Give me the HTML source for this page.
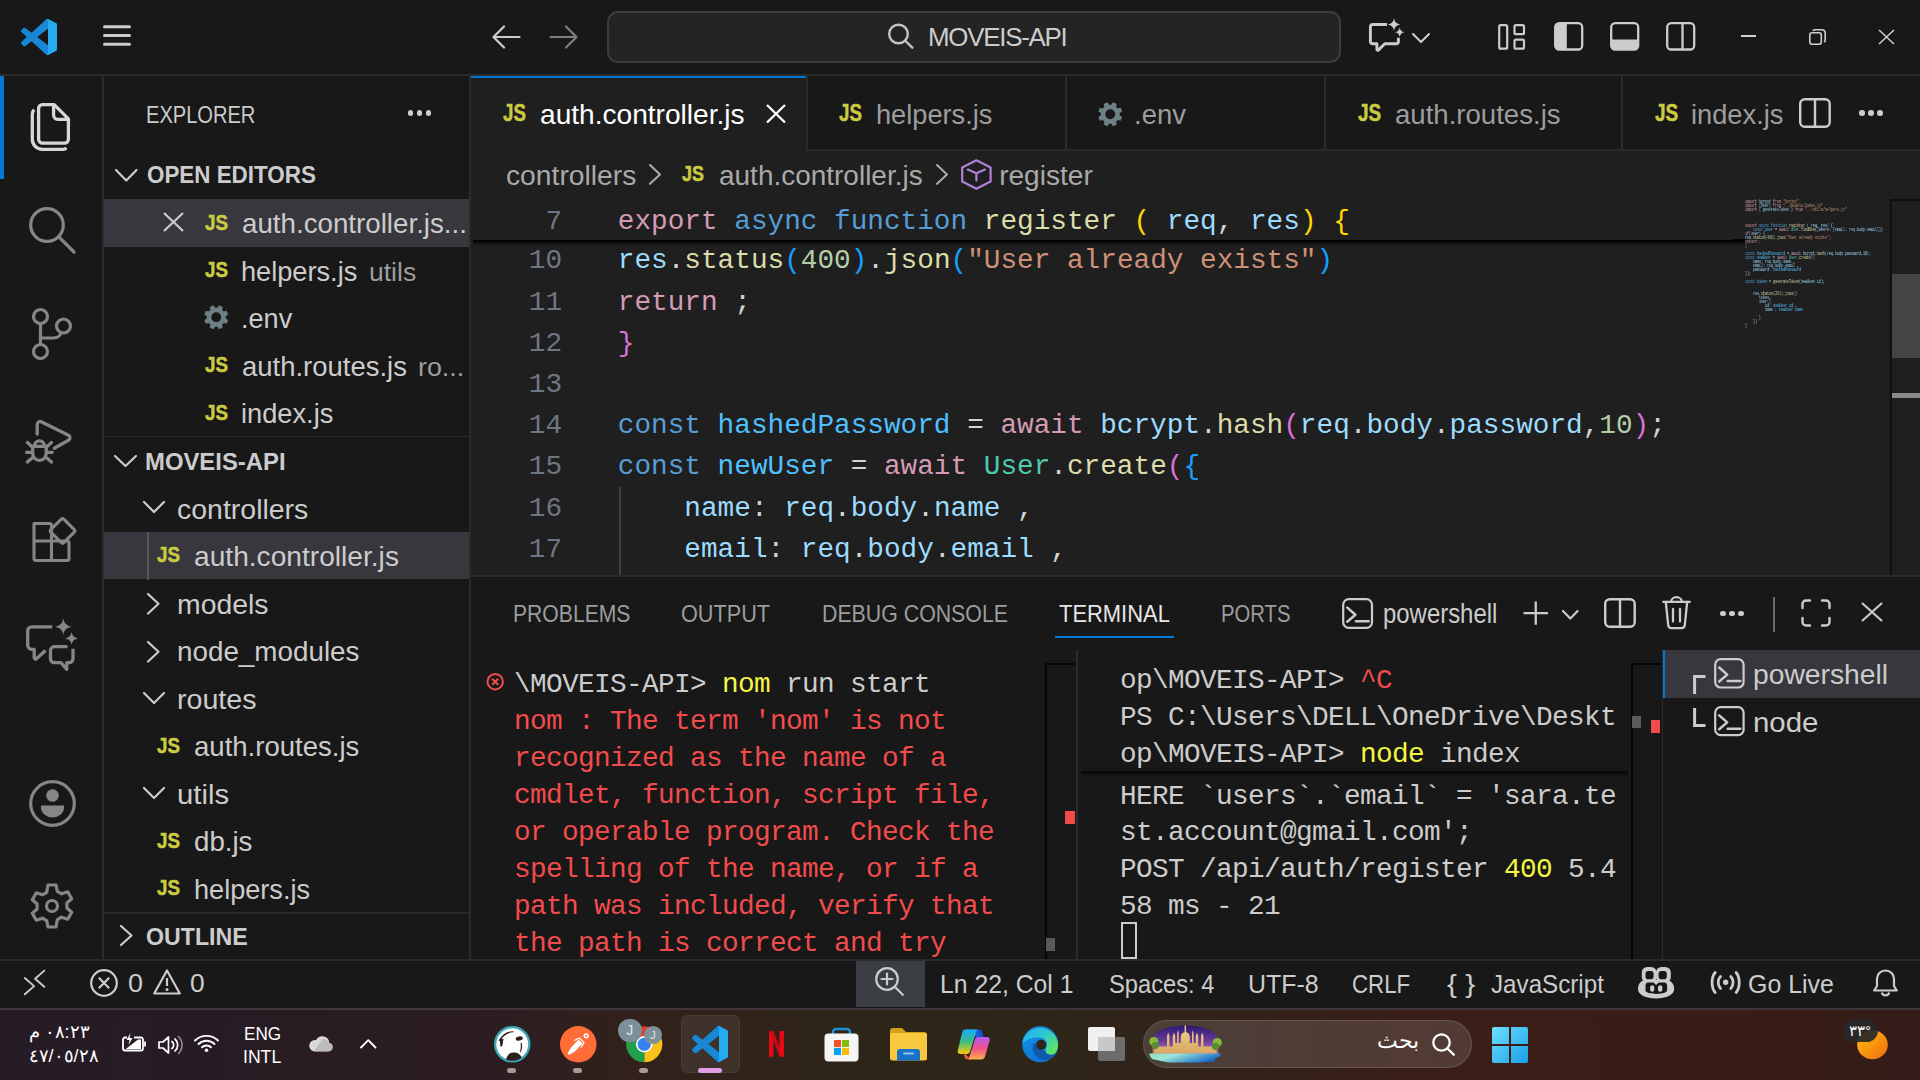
<!DOCTYPE html>
<html><head><meta charset="utf-8">
<style>
*{box-sizing:border-box;margin:0;padding:0}
html,body{width:1920px;height:1080px;overflow:hidden;background:#181818;font-family:"Liberation Sans",sans-serif;color:#cccccc}
.a{position:absolute;white-space:pre}
svg{position:absolute;overflow:visible}
</style></head><body>
<div class="a" style="left:0px;top:0px;width:1920px;height:74px;background:#181818;"></div>
<div class="a" style="left:0px;top:74px;width:1920px;height:2px;background:#2b2b2b;"></div>
<!-- logo -->
<svg style="left:21px;top:19px" width="36" height="36" viewBox="0 0 100 100"><path fill-rule="evenodd" d="M96.5 10.8 75.9 0.9c-2.4-1.2-5.2-.7-7.1 1.2L29.4 38 12.2 25c-1.6-1.2-3.8-1.1-5.3.2L1.4 30.3c-1.8 1.7-1.8 4.5 0 6.2L16.3 50 1.4 63.5c-1.8 1.7-1.8 4.5 0 6.2l5.5 5c1.5 1.4 3.7 1.5 5.3.2L29.4 62l39.4 35.9c1.9 1.9 4.7 2.4 7.1 1.2l20.6-9.9c2.2-1 3.5-3.2 3.5-5.6V16.4c0-2.4-1.4-4.6-3.5-5.6zM75 72.7 45.1 50 75 27.3z" fill="#1787d6"/><path d="M75.9 99.1 96.5 89.2c2.2-1 3.5-3.2 3.5-5.6V16.4c0-2.4-1.4-4.6-3.5-5.6L75.9.9C74.2 0 72.4-.1 70.8.5 72.5 1 75 2.5 75 5.5V94.5c0 3-2.5 4.5-4.2 5 1.6.5 3.5.4 5.1-.4z" fill="#27abf0"/></svg>
<!-- hamburger -->
<svg style="left:103px;top:25px" width="28" height="22" viewBox="0 0 28 22"><g stroke="#cccccc" stroke-width="3" stroke-linecap="round"><path d="M1.5 1.7h25M1.5 10.5h25M1.5 19.2h25"/></g></svg>
<!-- back / fwd -->
<svg style="left:492px;top:25px" width="29" height="24" viewBox="0 0 29 24"><g fill="none" stroke="#cccccc" stroke-width="2.2" stroke-linecap="round" stroke-linejoin="round"><path d="M12 1.5 1.5 12 12 22.5M1.5 12h26"/></g></svg>
<svg style="left:549px;top:25px" width="29" height="24" viewBox="0 0 29 24"><g fill="none" stroke="#7f7f7f" stroke-width="2.2" stroke-linecap="round" stroke-linejoin="round"><path d="M17 1.5 27.5 12 17 22.5M1.5 12h26"/></g></svg>
<!-- command center -->
<div class="a" style="left:607px;top:11px;width:734px;height:52px;background:#242424;border:2px solid #3c3c3c;border-radius:11px"></div>
<svg style="left:887px;top:23px" width="27" height="26" viewBox="0 0 27 26"><g fill="none" stroke="#c4c4c4" stroke-width="2.4" stroke-linecap="round"><circle cx="11.5" cy="11" r="9.3"/><path d="M18.5 18 25.3 24.7"/></g></svg>
<div class="a" style="left:928px;top:22px;font-size:25.9px;line-height:30px;color:#cccccc;letter-spacing:-1.25px">MOVEIS-API</div>
<!-- copilot -->
<svg style="left:1366px;top:18px" width="39" height="36" viewBox="0 0 39 36"><path d="M21 6.5H6.6a2.2 2.2 0 0 0-2.2 2.2V23.6a2.2 2.2 0 0 0 2.2 2.2H10.9V31.2a1 1 0 0 0 1.7.7L18.8 25.8H30.2a2.2 2.2 0 0 0 2.2-2.2V19.8" fill="none" stroke="#cccccc" stroke-width="2.9" stroke-linejoin="round"/><path d="M28 0.2Q28.8 5.6 34.2 6.4 28.8 7.2 28 12.6 27.2 7.2 21.8 6.4 27.2 5.6 28 .2Z" fill="#cccccc"/><path d="M33.7 9.4Q34.3 13.6 38.5 14.2 34.3 14.8 33.7 19 33.1 14.8 28.9 14.2 33.1 13.6 33.7 9.4Z" fill="#cccccc"/></svg>
<svg style="left:1412px;top:33px" width="18" height="10" viewBox="0 0 18 10"><path d="M1 1 9 9 17 1" fill="none" stroke="#cccccc" stroke-width="2.1" stroke-linecap="round" stroke-linejoin="round"/></svg>
<!-- layout icons -->
<svg style="left:1498px;top:24px" width="28" height="26" viewBox="0 0 28 26"><g fill="none" stroke="#cccccc" stroke-width="2.2"><rect x="1.2" y="1.2" width="8" height="23.5" rx="1.5"/><rect x="16.5" y="1.2" width="9.5" height="9" rx="1.5"/><rect x="16.5" y="15.7" width="9.5" height="9" rx="1.5"/></g></svg>
<svg style="left:1554px;top:22px" width="30" height="29" viewBox="0 0 30 29"><rect x="1.2" y="1.2" width="27" height="26.3" rx="4" fill="none" stroke="#cccccc" stroke-width="2.3"/><path d="M5 1.2h7.8v26.3H5a3.8 3.8 0 0 1-3.8-3.8V5A3.8 3.8 0 0 1 5 1.2z" fill="#cccccc"/></svg>
<svg style="left:1610px;top:22px" width="30" height="29" viewBox="0 0 30 29"><rect x="1.2" y="1.2" width="27" height="26.3" rx="4" fill="none" stroke="#cccccc" stroke-width="2.3"/><path d="M1.2 17.5h27v6.2a3.8 3.8 0 0 1-3.8 3.8H5a3.8 3.8 0 0 1-3.8-3.8z" fill="#cccccc"/></svg>
<svg style="left:1666px;top:22px" width="30" height="29" viewBox="0 0 30 29"><g fill="none" stroke="#cccccc" stroke-width="2.3"><rect x="1.2" y="1.2" width="27" height="26.3" rx="4"/><path d="M16.5 1.2v26.3"/></g></svg>
<!-- window controls -->
<div class="a" style="left:1741px;top:35px;width:15px;height:2px;background:#d0d0d0"></div>
<svg style="left:1809px;top:29px" width="17" height="16" viewBox="0 0 17 16"><g fill="none" stroke="#d0d0d0" stroke-width="1.6"><rect x="0.8" y="3.8" width="11.5" height="11.4" rx="2.2"/><path d="M3.8 1.7C4.4 1 5.2.8 6.2.8h6.5c2 0 3.5 1.5 3.5 3.5v6.5c0 1-.3 1.8-.9 2.4"/></g></svg>
<svg style="left:1878px;top:29px" width="17" height="16" viewBox="0 0 17 16"><path d="M1 1 16 15M16 1 1 15" stroke="#d0d0d0" stroke-width="1.5"/></svg>
<div class="a" style="left:0px;top:76px;width:102px;height:884px;background:#181818;"></div>
<div class="a" style="left:102px;top:76px;width:2px;height:884px;background:#2b2b2b;"></div>
<div class="a" style="left:0;top:76px;width:4px;height:103px;background:#0078d4"></div>
<!-- files -->
<svg style="left:24px;top:96px" width="56" height="60" viewBox="0 0 56 60"><g fill="none" stroke="#d7d7d7" stroke-width="3.3" stroke-linejoin="round"><path d="M14.6 12.6A4 4 0 0 1 18.6 8.6H30.2L44.4 22.8V43.2A4 4 0 0 1 40.4 47.2H18.6A4 4 0 0 1 14.6 43.2Z"/><path d="M29.6 8.6V19.3A4 4 0 0 0 33.6 23.3H44.4"/><path d="M10.2 13.8A6 6 0 0 0 8.3 18.2V43.3A10 10 0 0 0 18.3 53.3H38.9A6 6 0 0 0 42.5 51.9"/></g></svg>
<!-- search -->
<svg style="left:29px;top:207px" width="47" height="47" viewBox="0 0 47 47"><g fill="none" stroke="#868686" stroke-width="3.2" stroke-linecap="round"><circle cx="18" cy="18" r="16.3"/><path d="M29.8 29.8 45 45"/></g></svg>
<!-- scm -->
<svg style="left:32px;top:308px" width="40" height="52" viewBox="0 0 40 52"><g fill="none" stroke="#868686" stroke-width="3.2"><circle cx="8.5" cy="8.5" r="7"/><circle cx="8.5" cy="43.5" r="7"/><circle cx="31.5" cy="18" r="7"/><path d="M8.5 15.5v21M8.5 30h13a8 8 0 0 0 8-6.5"/></g></svg>
<!-- debug -->
<svg style="left:25px;top:418px" width="48" height="47" viewBox="0 0 48 47"><g fill="none" stroke="#868686" stroke-width="3.3" stroke-linecap="round" stroke-linejoin="round"><path d="M12.2 16V6.5a3 3 0 0 1 4.5-2.6L43.5 17.3a2.8 2.8 0 0 1 0 4.9L29.3 30.3"/><path d="M7.7 28.4H21.2V35.6A6.75 6.8 0 0 1 7.7 35.6Z"/><path d="M9.5 28.4A4.95 5.6 0 0 1 19.4 28.4"/><path d="M2.4 24.6 6.8 28.4M1.6 34.3H6.5M2.4 44 6.8 40.2M26.5 24.6 22.1 28.4M27.3 34.3H22.4M26.5 44 22.1 40.2"/></g></svg>
<!-- extensions -->
<svg style="left:31px;top:517px" width="46" height="46" viewBox="0 0 46 46"><g fill="none" stroke="#868686" stroke-width="3.1" stroke-linejoin="round"><path d="M3 6.5h15.5a2 2 0 0 1 2 2V24h15.5a2 2 0 0 1 2 2v15.5a2 2 0 0 1-2 2H5a2 2 0 0 1-2-2z"/><path d="M20.5 24v19.5M3 24h17.5"/><path d="M32.8 2.2 43.3 12.7a1.8 1.8 0 0 1 0 2.5L32.8 25.7a1.8 1.8 0 0 1-2.5 0L19.8 15.2a1.8 1.8 0 0 1 0-2.5L30.3 2.2a1.8 1.8 0 0 1 2.5 0z"/></g></svg>
<!-- chat -->
<svg style="left:20px;top:612px" width="64" height="64" viewBox="0 0 64 64"><g fill="none" stroke="#868686" stroke-width="3.3" stroke-linejoin="round"><path d="M32.3 14.8H11.7A4 4 0 0 0 7.7 18.8V33.3A4 4 0 0 0 11.7 37.3H14.2V45.8A1.3 1.3 0 0 0 16.4 46.7L25.5 38.5"/><path d="M47.5 34.7H34.5A4 4 0 0 0 30.5 38.7V46.7A4 4 0 0 0 34.5 50.7H40.9L46.8 57.3V50.7H49A4 4 0 0 0 53 46.7V36.8"/></g><path d="M43.3 6.6Q44.3 13.8 51.5 14.8 44.3 15.8 43.3 23 42.3 15.8 35.1 14.8 42.3 13.8 43.3 6.6Z" fill="#868686"/><path d="M51.6 20.1Q52.4 25.6 57.9 26.4 52.4 27.2 51.6 32.7 50.8 27.2 45.3 26.4 50.8 25.6 51.6 20.1Z" fill="#868686"/></svg>
<!-- account -->
<svg style="left:29px;top:780px" width="47" height="47" viewBox="0 0 47 47"><circle cx="23.5" cy="23.5" r="21.8" fill="none" stroke="#868686" stroke-width="3.2"/><circle cx="23.5" cy="15.5" r="6.3" fill="#868686"/><path d="M12 25.5h23a0 0 0 0 1 0 0v2a11.5 10 0 0 1-23 0v-2z" fill="#868686"/></svg>
<!-- settings -->
<svg style="left:29px;top:883px" width="46" height="46" viewBox="0 0 46 46"><g fill="none" stroke="#868686" stroke-width="3.2" stroke-linejoin="round"><path d="M19 2h8l1.3 6.3 4.3 2.5 6.1-2 4 6.9-4.8 4.3v5l4.8 4.3-4 6.9-6.1-2-4.3 2.5L27 44h-8l-1.3-6.3-4.3-2.5-6.1 2-4-6.9 4.8-4.3v-5L3.3 16.7l4-6.9 6.1 2 4.3-2.5z"/><circle cx="23" cy="23" r="5.5"/></g></svg>
<div class="a" style="left:104px;top:76px;width:365px;height:883px;background:#181818;"></div>
<div class="a" style="left:469px;top:76px;width:2px;height:883px;background:#2b2b2b;"></div>
<div class="a" style="left:146.15px;top:101.89px;font-size:23.76px;line-height:26.54px;color:#cccccc;font-family:'Liberation Sans',sans-serif;transform:scaleX(0.8453);transform-origin:0 0;">EXPLORER</div>
<div class="a" style="left:407.7px;top:110px;width:5.6px;height:5.6px;border-radius:50%;background:#cccccc"></div>
<div class="a" style="left:416.7px;top:110px;width:5.6px;height:5.6px;border-radius:50%;background:#cccccc"></div>
<div class="a" style="left:425.7px;top:110px;width:5.6px;height:5.6px;border-radius:50%;background:#cccccc"></div>
<svg style="left:114.5px;top:169px" width="22.5" height="12.5" viewBox="0 0 22.5 12.5"><path d="M1 1 11.25 11.5 21.5 1" fill="none" stroke="#cccccc" stroke-width="2.2" stroke-linecap="round" stroke-linejoin="round"/></svg>
<div class="a" style="left:146.58px;top:162.29px;font-size:23.76px;line-height:26.54px;color:#cccccc;font-family:'Liberation Sans',sans-serif;font-weight:bold;transform:scaleX(0.9429);transform-origin:0 0;">OPEN EDITORS</div>
<div class="a" style="left:104px;top:199px;width:365px;height:47.5px;background:#37373d;"></div>
<svg style="left:163px;top:212px" width="21" height="20" viewBox="0 0 21 20"><path d="M1 1 20 19M20 1 1 19" stroke="#cccccc" stroke-width="2.2"/></svg>
<div class="a" style="left:204.72px;top:209.81px;font-size:22.97px;line-height:25.66px;color:#cbcb41;font-family:'Liberation Sans',sans-serif;font-weight:bold;transform:scaleX(0.8193);transform-origin:0 0;-webkit-text-stroke:0.5px #cbcb41;">JS</div>
<div class="a" style="left:242.02px;top:208.38px;font-size:28.08px;line-height:31.37px;color:#cccccc;font-family:'Liberation Sans',sans-serif;transform:scaleX(0.9873);transform-origin:0 0;">auth.controller.js...</div>
<div class="a" style="left:204.72px;top:257.33px;font-size:22.97px;line-height:25.66px;color:#cbcb41;font-family:'Liberation Sans',sans-serif;font-weight:bold;transform:scaleX(0.8193);transform-origin:0 0;-webkit-text-stroke:0.5px #cbcb41;">JS</div>
<div class="a" style="left:241.32px;top:255.90px;font-size:28.08px;line-height:31.37px;color:#cccccc;font-family:'Liberation Sans',sans-serif;transform:scaleX(0.9675);transform-origin:0 0;">helpers.js</div>
<div class="a" style="left:368.78px;top:257.86px;font-size:25.92px;line-height:28.96px;color:#9d9d9d;font-family:'Liberation Sans',sans-serif;transform:scaleX(1.0236);transform-origin:0 0;">utils</div>
<svg style="left:203.5px;top:305.34000000000003px" width="24.5" height="24.5" viewBox="0 0 24.5 24.5"><path fill-rule="evenodd" fill="#6d8086" d="M21.72,13.51 L24.20,14.96 L22.61,18.79 L19.84,18.05 L18.05,19.84 L18.79,22.61 L14.96,24.20 L13.51,21.72 L10.99,21.72 L9.54,24.20 L5.71,22.61 L6.45,19.84 L4.66,18.05 L1.89,18.79 L0.30,14.96 L2.78,13.51 L2.78,10.99 L0.30,9.54 L1.89,5.71 L4.66,6.45 L6.45,4.66 L5.71,1.89 L9.54,0.30 L10.99,2.78 L13.51,2.78 L14.96,0.30 L18.79,1.89 L18.05,4.66 L19.84,6.45 L22.61,5.71 L24.20,9.54 L21.72,10.99 Z M17.15,12.25 A4.9,4.9 0 1 0 7.35,12.25 A4.9,4.9 0 1 0 17.15,12.25 Z"/></svg>
<div class="a" style="left:240.73px;top:303.42px;font-size:28.08px;line-height:31.37px;color:#cccccc;font-family:'Liberation Sans',sans-serif;transform:scaleX(0.9640);transform-origin:0 0;">.env</div>
<div class="a" style="left:204.72px;top:352.37px;font-size:22.97px;line-height:25.66px;color:#cbcb41;font-family:'Liberation Sans',sans-serif;font-weight:bold;transform:scaleX(0.8193);transform-origin:0 0;-webkit-text-stroke:0.5px #cbcb41;">JS</div>
<div class="a" style="left:242.03px;top:350.94px;font-size:28.08px;line-height:31.37px;color:#cccccc;font-family:'Liberation Sans',sans-serif;transform:scaleX(0.9786);transform-origin:0 0;">auth.routes.js</div>
<div class="a" style="left:418.22px;top:352.90px;font-size:25.92px;line-height:28.96px;color:#9d9d9d;font-family:'Liberation Sans',sans-serif;transform:scaleX(1.0354);transform-origin:0 0;">ro...</div>
<div class="a" style="left:204.72px;top:399.89px;font-size:22.97px;line-height:25.66px;color:#cbcb41;font-family:'Liberation Sans',sans-serif;font-weight:bold;transform:scaleX(0.8193);transform-origin:0 0;-webkit-text-stroke:0.5px #cbcb41;">JS</div>
<div class="a" style="left:241.38px;top:398.46px;font-size:28.08px;line-height:31.37px;color:#cccccc;font-family:'Liberation Sans',sans-serif;transform:scaleX(0.9695);transform-origin:0 0;">index.js</div>
<div class="a" style="left:104px;top:435.5px;width:365px;height:1.5px;background:#2b2b2b;"></div>
<svg style="left:114px;top:455px" width="23" height="12" viewBox="0 0 23 12"><path d="M1 1 11.5 11 22 1" fill="none" stroke="#cccccc" stroke-width="2.2" stroke-linecap="round" stroke-linejoin="round"/></svg>
<div class="a" style="left:145.40px;top:449.39px;font-size:23.76px;line-height:26.54px;color:#cccccc;font-family:'Liberation Sans',sans-serif;font-weight:bold;transform:scaleX(1.0047);transform-origin:0 0;">MOVEIS-API</div>
<div class="a" style="left:104px;top:532px;width:365px;height:47px;background:#37373d;"></div>
<div class="a" style="left:146.8px;top:532px;width:2px;height:47.5px;background:#585858;"></div>
<svg style="left:143px;top:501.4200000000001px" width="22" height="12.0" viewBox="0 0 22 12.0"><path d="M1 1 11.0 11.0 21 1" fill="none" stroke="#cccccc" stroke-width="2.2" stroke-linecap="round" stroke-linejoin="round"/></svg>
<div class="a" style="left:177.19px;top:493.50px;font-size:28.08px;line-height:31.37px;color:#cccccc;font-family:'Liberation Sans',sans-serif;transform:scaleX(1.0140);transform-origin:0 0;">controllers</div>
<div class="a" style="left:157.22px;top:542.45px;font-size:22.97px;line-height:25.66px;color:#cbcb41;font-family:'Liberation Sans',sans-serif;font-weight:bold;transform:scaleX(0.8193);transform-origin:0 0;-webkit-text-stroke:0.5px #cbcb41;">JS</div>
<div class="a" style="left:194.20px;top:541.02px;font-size:28.08px;line-height:31.37px;color:#cccccc;font-family:'Liberation Sans',sans-serif;transform:scaleX(1.0024);transform-origin:0 0;">auth.controller.js</div>
<svg style="left:147px;top:593.46px" width="12.5" height="21.5" viewBox="0 0 12.5 21.5"><path d="M1 1 11.5 10.75 1 20.5" fill="none" stroke="#cccccc" stroke-width="2.2" stroke-linecap="round" stroke-linejoin="round"/></svg>
<div class="a" style="left:176.51px;top:588.54px;font-size:28.08px;line-height:31.37px;color:#cccccc;font-family:'Liberation Sans',sans-serif;transform:scaleX(1.0110);transform-origin:0 0;">models</div>
<svg style="left:147px;top:640.98px" width="12.5" height="21.5" viewBox="0 0 12.5 21.5"><path d="M1 1 11.5 10.75 1 20.5" fill="none" stroke="#cccccc" stroke-width="2.2" stroke-linecap="round" stroke-linejoin="round"/></svg>
<div class="a" style="left:176.55px;top:636.06px;font-size:28.08px;line-height:31.37px;color:#cccccc;font-family:'Liberation Sans',sans-serif;transform:scaleX(0.9904);transform-origin:0 0;">node_modules</div>
<svg style="left:143px;top:691.5px" width="22" height="12.0" viewBox="0 0 22 12.0"><path d="M1 1 11.0 11.0 21 1" fill="none" stroke="#cccccc" stroke-width="2.2" stroke-linecap="round" stroke-linejoin="round"/></svg>
<div class="a" style="left:176.50px;top:683.58px;font-size:28.08px;line-height:31.37px;color:#cccccc;font-family:'Liberation Sans',sans-serif;transform:scaleX(1.0191);transform-origin:0 0;">routes</div>
<div class="a" style="left:157.22px;top:732.53px;font-size:22.97px;line-height:25.66px;color:#cbcb41;font-family:'Liberation Sans',sans-serif;font-weight:bold;transform:scaleX(0.8193);transform-origin:0 0;-webkit-text-stroke:0.5px #cbcb41;">JS</div>
<div class="a" style="left:194.23px;top:731.10px;font-size:28.08px;line-height:31.37px;color:#cccccc;font-family:'Liberation Sans',sans-serif;transform:scaleX(0.9810);transform-origin:0 0;">auth.routes.js</div>
<svg style="left:143px;top:786.54px" width="22" height="12.0" viewBox="0 0 22 12.0"><path d="M1 1 11.0 11.0 21 1" fill="none" stroke="#cccccc" stroke-width="2.2" stroke-linecap="round" stroke-linejoin="round"/></svg>
<div class="a" style="left:176.50px;top:778.62px;font-size:28.08px;line-height:31.37px;color:#cccccc;font-family:'Liberation Sans',sans-serif;transform:scaleX(1.0425);transform-origin:0 0;">utils</div>
<div class="a" style="left:157.22px;top:827.57px;font-size:22.97px;line-height:25.66px;color:#cbcb41;font-family:'Liberation Sans',sans-serif;font-weight:bold;transform:scaleX(0.8193);transform-origin:0 0;-webkit-text-stroke:0.5px #cbcb41;">JS</div>
<div class="a" style="left:194.24px;top:826.14px;font-size:28.08px;line-height:31.37px;color:#cccccc;font-family:'Liberation Sans',sans-serif;transform:scaleX(0.9856);transform-origin:0 0;">db.js</div>
<div class="a" style="left:157.22px;top:875.09px;font-size:22.97px;line-height:25.66px;color:#cbcb41;font-family:'Liberation Sans',sans-serif;font-weight:bold;transform:scaleX(0.8193);transform-origin:0 0;-webkit-text-stroke:0.5px #cbcb41;">JS</div>
<div class="a" style="left:193.52px;top:873.66px;font-size:28.08px;line-height:31.37px;color:#cccccc;font-family:'Liberation Sans',sans-serif;transform:scaleX(0.9657);transform-origin:0 0;">helpers.js</div>
<div class="a" style="left:104px;top:912px;width:365px;height:1.5px;background:#2b2b2b;"></div>
<svg style="left:120px;top:925px" width="12.5" height="21" viewBox="0 0 12.5 21"><path d="M1 1 11.5 10.5 1 20" fill="none" stroke="#cccccc" stroke-width="2.2" stroke-linecap="round" stroke-linejoin="round"/></svg>
<div class="a" style="left:146.05px;top:923.69px;font-size:23.76px;line-height:26.54px;color:#cccccc;font-family:'Liberation Sans',sans-serif;font-weight:bold;transform:scaleX(0.9759);transform-origin:0 0;">OUTLINE</div>
<div class="a" style="left:471px;top:76px;width:1449px;height:499px;background:#1f1f1f;"></div>
<div class="a" style="left:471px;top:76px;width:1449px;height:73px;background:#181818;"></div>
<div class="a" style="left:471px;top:149px;width:1449px;height:2px;background:#2b2b2b;"></div>
<div class="a" style="left:471px;top:76px;width:335px;height:75px;background:#1f1f1f;"></div>
<div class="a" style="left:471px;top:76px;width:335px;height:2.2px;background:#0078d4;"></div>
<div class="a" style="left:806px;top:76px;width:2px;height:73px;background:#2b2b2b;"></div>
<div class="a" style="left:1065px;top:76px;width:2px;height:73px;background:#2b2b2b;"></div>
<div class="a" style="left:1324px;top:76px;width:2px;height:73px;background:#2b2b2b;"></div>
<div class="a" style="left:1621px;top:76px;width:2px;height:73px;background:#2b2b2b;"></div>
<div class="a" style="left:502.52px;top:99.52px;font-size:24.06px;line-height:26.88px;color:#cbcb41;font-family:'Liberation Sans',sans-serif;font-weight:bold;transform:scaleX(0.7787);transform-origin:0 0;-webkit-text-stroke:0.5px #cbcb41;">JS</div>
<div class="a" style="left:540.06px;top:98.98px;font-size:28.08px;line-height:31.37px;color:#ffffff;font-family:'Liberation Sans',sans-serif;">auth.controller.js</div>
<svg style="left:766px;top:103.5px" width="20" height="19.5" viewBox="0 0 20 19.5"><path d="M1 1 19 18.5M19 1 1 18.5" stroke="#ffffff" stroke-width="2.3"/></svg>
<div class="a" style="left:839.42px;top:99.52px;font-size:24.06px;line-height:26.88px;color:#cbcb41;font-family:'Liberation Sans',sans-serif;font-weight:bold;transform:scaleX(0.7787);transform-origin:0 0;-webkit-text-stroke:0.5px #cbcb41;">JS</div>
<div class="a" style="left:875.92px;top:98.98px;font-size:28.08px;line-height:31.37px;color:#9d9d9d;font-family:'Liberation Sans',sans-serif;transform:scaleX(0.9679);transform-origin:0 0;">helpers.js</div>
<svg style="left:1098px;top:101.5px" width="24.5" height="24.5" viewBox="0 0 24.5 24.5"><path fill-rule="evenodd" fill="#6d8086" d="M21.72,13.51 L24.20,14.96 L22.61,18.79 L19.84,18.05 L18.05,19.84 L18.79,22.61 L14.96,24.20 L13.51,21.72 L10.99,21.72 L9.54,24.20 L5.71,22.61 L6.45,19.84 L4.66,18.05 L1.89,18.79 L0.30,14.96 L2.78,13.51 L2.78,10.99 L0.30,9.54 L1.89,5.71 L4.66,6.45 L6.45,4.66 L5.71,1.89 L9.54,0.30 L10.99,2.78 L13.51,2.78 L14.96,0.30 L18.79,1.89 L18.05,4.66 L19.84,6.45 L22.61,5.71 L24.20,9.54 L21.72,10.99 Z M17.15,12.25 A4.9,4.9 0 1 0 7.35,12.25 A4.9,4.9 0 1 0 17.15,12.25 Z"/></svg>
<div class="a" style="left:1134.49px;top:98.98px;font-size:28.08px;line-height:31.37px;color:#9d9d9d;font-family:'Liberation Sans',sans-serif;transform:scaleX(0.9779);transform-origin:0 0;">.env</div>
<div class="a" style="left:1357.61px;top:99.52px;font-size:24.06px;line-height:26.88px;color:#cbcb41;font-family:'Liberation Sans',sans-serif;font-weight:bold;transform:scaleX(0.7858);transform-origin:0 0;-webkit-text-stroke:0.5px #cbcb41;">JS</div>
<div class="a" style="left:1394.83px;top:98.98px;font-size:28.08px;line-height:31.37px;color:#9d9d9d;font-family:'Liberation Sans',sans-serif;transform:scaleX(0.9822);transform-origin:0 0;">auth.routes.js</div>
<div class="a" style="left:1654.51px;top:99.52px;font-size:24.06px;line-height:26.88px;color:#cbcb41;font-family:'Liberation Sans',sans-serif;font-weight:bold;transform:scaleX(0.7893);transform-origin:0 0;-webkit-text-stroke:0.5px #cbcb41;">JS</div>
<div class="a" style="left:1690.58px;top:98.98px;font-size:28.08px;line-height:31.37px;color:#9d9d9d;font-family:'Liberation Sans',sans-serif;transform:scaleX(0.9706);transform-origin:0 0;">index.js</div>
<svg style="left:1799px;top:97.5px" width="32" height="30" viewBox="0 0 32 30"><g fill="none" stroke="#cccccc" stroke-width="2.4"><rect x="1.2" y="1.2" width="29.5" height="27.6" rx="4.5"/><path d="M16 1.2v27.6"/></g></svg>
<div class="a" style="left:1859.2px;top:110px;width:5.6px;height:5.6px;border-radius:50%;background:#cccccc"></div>
<div class="a" style="left:1868.2px;top:110px;width:5.6px;height:5.6px;border-radius:50%;background:#cccccc"></div>
<div class="a" style="left:1877.2px;top:110px;width:5.6px;height:5.6px;border-radius:50%;background:#cccccc"></div>
<div class="a" style="left:505.70px;top:159.98px;font-size:28.08px;line-height:31.37px;color:#a9a9a9;font-family:'Liberation Sans',sans-serif;transform:scaleX(1.0061);transform-origin:0 0;">controllers</div>
<svg style="left:648.5px;top:163.5px" width="12.0" height="20.80000000000001" viewBox="0 0 12.0 20.80000000000001"><path d="M1 1 11.0 10.400000000000006 1 19.80000000000001" fill="none" stroke="#a9a9a9" stroke-width="2.1" stroke-linecap="round" stroke-linejoin="round"/></svg>
<div class="a" style="left:681.63px;top:162.39px;font-size:21.22px;line-height:23.71px;color:#cbcb41;font-family:'Liberation Sans',sans-serif;font-weight:bold;transform:scaleX(0.8426);transform-origin:0 0;-webkit-text-stroke:0.5px #cbcb41;">JS</div>
<div class="a" style="left:718.81px;top:159.98px;font-size:28.08px;line-height:31.37px;color:#a9a9a9;font-family:'Liberation Sans',sans-serif;transform:scaleX(0.9960);transform-origin:0 0;">auth.controller.js</div>
<svg style="left:936px;top:163.5px" width="12" height="20.80000000000001" viewBox="0 0 12 20.80000000000001"><path d="M1 1 11 10.400000000000006 1 19.80000000000001" fill="none" stroke="#a9a9a9" stroke-width="2.1" stroke-linecap="round" stroke-linejoin="round"/></svg>
<svg style="left:961px;top:159px" width="31" height="31" viewBox="0 0 31 31"><g fill="none" stroke="#b180d7" stroke-width="2.2" stroke-linejoin="round" stroke-linecap="round"><path d="M15.4 1.3 29.6 8.4V22.6L15.4 29.7 1.2 22.6V8.4Z"/><path d="M6.8 10.6 15.4 14.3 24 10.6M15.4 14.3V21.6"/></g></svg>
<div class="a" style="left:999.14px;top:159.98px;font-size:28.08px;line-height:31.37px;color:#a9a9a9;font-family:'Liberation Sans',sans-serif;">register</div>
<div class="a" style="left:528.76px;top:245.42px;font-size:27.72px;line-height:31.40px;font-family:'Liberation Mono',monospace;"><span style="color:#6e7681">10</span></div>
<div class="a" style="left:617.80px;top:245.42px;font-size:27.72px;line-height:31.40px;font-family:'Liberation Mono',monospace;"><span style="color:#9cdcfe">res</span><span style="color:#d4d4d4">.</span><span style="color:#dcdcaa">status</span><span style="color:#179fff">(</span><span style="color:#b5cea8">400</span><span style="color:#179fff">)</span><span style="color:#d4d4d4">.</span><span style="color:#dcdcaa">json</span><span style="color:#179fff">(</span><span style="color:#ce9178">&quot;User already exists&quot;</span><span style="color:#179fff">)</span></div>
<div class="a" style="left:528.76px;top:286.62px;font-size:27.72px;line-height:31.40px;font-family:'Liberation Mono',monospace;"><span style="color:#6e7681">11</span></div>
<div class="a" style="left:617.80px;top:286.62px;font-size:27.72px;line-height:31.40px;font-family:'Liberation Mono',monospace;"><span style="color:#d49bb4">return</span><span style="color:#d4d4d4"> ;</span></div>
<div class="a" style="left:528.76px;top:327.82px;font-size:27.72px;line-height:31.40px;font-family:'Liberation Mono',monospace;"><span style="color:#6e7681">12</span></div>
<div class="a" style="left:617.80px;top:327.82px;font-size:27.72px;line-height:31.40px;font-family:'Liberation Mono',monospace;"><span style="color:#da70d6">}</span></div>
<div class="a" style="left:528.76px;top:369.02px;font-size:27.72px;line-height:31.40px;font-family:'Liberation Mono',monospace;"><span style="color:#6e7681">13</span></div>
<div class="a" style="left:528.76px;top:410.22px;font-size:27.72px;line-height:31.40px;font-family:'Liberation Mono',monospace;"><span style="color:#6e7681">14</span></div>
<div class="a" style="left:617.80px;top:410.22px;font-size:27.72px;line-height:31.40px;font-family:'Liberation Mono',monospace;"><span style="color:#569cd6">const</span><span style="color:#d4d4d4"> </span><span style="color:#4fc1ff">hashedPassword</span><span style="color:#d4d4d4"> = </span><span style="color:#d49bb4">await</span><span style="color:#d4d4d4"> </span><span style="color:#9cdcfe">bcrypt</span><span style="color:#d4d4d4">.</span><span style="color:#dcdcaa">hash</span><span style="color:#da70d6">(</span><span style="color:#9cdcfe">req</span><span style="color:#d4d4d4">.</span><span style="color:#9cdcfe">body</span><span style="color:#d4d4d4">.</span><span style="color:#9cdcfe">password</span><span style="color:#d4d4d4">,</span><span style="color:#b5cea8">10</span><span style="color:#da70d6">)</span><span style="color:#d4d4d4">;</span></div>
<div class="a" style="left:528.76px;top:451.42px;font-size:27.72px;line-height:31.40px;font-family:'Liberation Mono',monospace;"><span style="color:#6e7681">15</span></div>
<div class="a" style="left:617.80px;top:451.42px;font-size:27.72px;line-height:31.40px;font-family:'Liberation Mono',monospace;"><span style="color:#569cd6">const</span><span style="color:#d4d4d4"> </span><span style="color:#4fc1ff">newUser</span><span style="color:#d4d4d4"> = </span><span style="color:#d49bb4">await</span><span style="color:#d4d4d4"> </span><span style="color:#4ec9b0">User</span><span style="color:#d4d4d4">.</span><span style="color:#dcdcaa">create</span><span style="color:#da70d6">(</span><span style="color:#179fff">{</span></div>
<div class="a" style="left:528.76px;top:492.62px;font-size:27.72px;line-height:31.40px;font-family:'Liberation Mono',monospace;"><span style="color:#6e7681">16</span></div>
<div class="a" style="left:617.80px;top:492.62px;font-size:27.72px;line-height:31.40px;font-family:'Liberation Mono',monospace;"><span style="color:#d4d4d4">    </span><span style="color:#9cdcfe">name</span><span style="color:#d4d4d4">: </span><span style="color:#9cdcfe">req</span><span style="color:#d4d4d4">.</span><span style="color:#9cdcfe">body</span><span style="color:#d4d4d4">.</span><span style="color:#9cdcfe">name</span><span style="color:#d4d4d4"> ,</span></div>
<div class="a" style="left:528.76px;top:533.82px;font-size:27.72px;line-height:31.40px;font-family:'Liberation Mono',monospace;"><span style="color:#6e7681">17</span></div>
<div class="a" style="left:617.80px;top:533.82px;font-size:27.72px;line-height:31.40px;font-family:'Liberation Mono',monospace;"><span style="color:#d4d4d4">    </span><span style="color:#9cdcfe">email</span><span style="color:#d4d4d4">: </span><span style="color:#9cdcfe">req</span><span style="color:#d4d4d4">.</span><span style="color:#9cdcfe">body</span><span style="color:#d4d4d4">.</span><span style="color:#9cdcfe">email</span><span style="color:#d4d4d4"> ,</span></div>
<div class="a" style="left:619px;top:487px;width:2px;height:88px;background:#404040;"></div>
<div class="a" style="left:471px;top:198px;width:1274px;height:41px;background:#1f1f1f;"></div>
<div class="a" style="left:545.39px;top:205.92px;font-size:27.72px;line-height:31.40px;font-family:'Liberation Mono',monospace;"><span style="color:#6e7681">7</span></div>
<div class="a" style="left:617.80px;top:205.92px;font-size:27.72px;line-height:31.40px;font-family:'Liberation Mono',monospace;"><span style="color:#d49bb4">export</span><span style="color:#d4d4d4"> </span><span style="color:#569cd6">async</span><span style="color:#d4d4d4"> </span><span style="color:#569cd6">function</span><span style="color:#d4d4d4"> </span><span style="color:#dcdcaa">register</span><span style="color:#d4d4d4"> </span><span style="color:#ffd700">(</span><span style="color:#d4d4d4"> </span><span style="color:#9cdcfe">req</span><span style="color:#d4d4d4">, </span><span style="color:#9cdcfe">res</span><span style="color:#ffd700">)</span><span style="color:#d4d4d4"> </span><span style="color:#ffd700">{</span></div>
<div class="a" style="left:473px;top:240px;width:1272px;height:6px;background:linear-gradient(#000000,rgba(0,0,0,.6) 40%,rgba(0,0,0,0))"></div>
<div class="a" style="left:1744.70px;top:198.87px;font-size:4.6px;line-height:5.21px;font-family:'Liberation Mono',monospace;transform:scaleX(0.7246);transform-origin:0 0;will-change:transform;"><span style="color:#d49bb4">import</span><span style="color:#9cdcfe"> bcrypt </span><span style="color:#d49bb4">from</span><span style="color:#ce9178"> &quot;bcrypt&quot;</span></div>
<div class="a" style="left:1744.70px;top:202.87px;font-size:4.6px;line-height:5.21px;font-family:'Liberation Mono',monospace;transform:scaleX(0.7246);transform-origin:0 0;will-change:transform;"><span style="color:#d49bb4">import</span><span style="color:#9cdcfe"> {User} </span><span style="color:#d49bb4">from</span><span style="color:#ce9178"> &quot;../models/index.js&quot;</span></div>
<div class="a" style="left:1744.70px;top:206.87px;font-size:4.6px;line-height:5.21px;font-family:'Liberation Mono',monospace;transform:scaleX(0.7246);transform-origin:0 0;will-change:transform;"><span style="color:#d49bb4">import</span><span style="color:#9cdcfe"> { generateToken } </span><span style="color:#d49bb4">from</span><span style="color:#ce9178"> &quot;../utils/helpers.js&quot;</span></div>
<div class="a" style="left:1744.70px;top:222.87px;font-size:4.6px;line-height:5.21px;font-family:'Liberation Mono',monospace;transform:scaleX(0.7246);transform-origin:0 0;will-change:transform;"><span style="color:#d49bb4">export</span><span style="color:#569cd6"> async function </span><span style="color:#dcdcaa">register</span><span style="color:#9cdcfe"> ( req, res) {</span></div>
<div class="a" style="left:1744.70px;top:226.87px;font-size:4.6px;line-height:5.21px;font-family:'Liberation Mono',monospace;transform:scaleX(0.7246);transform-origin:0 0;will-change:transform;"><span style="color:#569cd6">    const </span><span style="color:#4fc1ff">user</span><span style="color:#d4d4d4"> = </span><span style="color:#d49bb4">await </span><span style="color:#4ec9b0">User</span><span style="color:#dcdcaa">.findOne</span><span style="color:#9cdcfe">({where: {email: req.body.email}})</span></div>
<div class="a" style="left:1744.70px;top:230.87px;font-size:4.6px;line-height:5.21px;font-family:'Liberation Mono',monospace;transform:scaleX(0.7246);transform-origin:0 0;will-change:transform;"><span style="color:#d49bb4">if</span><span style="color:#9cdcfe">(user) {</span></div>
<div class="a" style="left:1744.70px;top:234.87px;font-size:4.6px;line-height:5.21px;font-family:'Liberation Mono',monospace;transform:scaleX(0.7246);transform-origin:0 0;will-change:transform;"><span style="color:#9cdcfe">res</span><span style="color:#dcdcaa">.status</span><span style="color:#b5cea8">(400)</span><span style="color:#dcdcaa">.json</span><span style="color:#ce9178">(&quot;User already exists&quot;)</span></div>
<div class="a" style="left:1744.70px;top:238.87px;font-size:4.6px;line-height:5.21px;font-family:'Liberation Mono',monospace;transform:scaleX(0.7246);transform-origin:0 0;will-change:transform;"><span style="color:#d49bb4">return ;</span></div>
<div class="a" style="left:1744.70px;top:242.87px;font-size:4.6px;line-height:5.21px;font-family:'Liberation Mono',monospace;transform:scaleX(0.7246);transform-origin:0 0;will-change:transform;"><span style="color:#da70d6">}</span></div>
<div class="a" style="left:1744.70px;top:250.87px;font-size:4.6px;line-height:5.21px;font-family:'Liberation Mono',monospace;transform:scaleX(0.7246);transform-origin:0 0;will-change:transform;"><span style="color:#569cd6">const </span><span style="color:#4fc1ff">hashedPassword</span><span style="color:#d4d4d4"> = </span><span style="color:#d49bb4">await </span><span style="color:#9cdcfe">bcrypt</span><span style="color:#dcdcaa">.hash</span><span style="color:#9cdcfe">(req.body.password,10);</span></div>
<div class="a" style="left:1744.70px;top:254.87px;font-size:4.6px;line-height:5.21px;font-family:'Liberation Mono',monospace;transform:scaleX(0.7246);transform-origin:0 0;will-change:transform;"><span style="color:#569cd6">const </span><span style="color:#4fc1ff">newUser</span><span style="color:#d4d4d4"> = </span><span style="color:#d49bb4">await </span><span style="color:#4ec9b0">User</span><span style="color:#dcdcaa">.create</span><span style="color:#da70d6">({</span></div>
<div class="a" style="left:1744.70px;top:258.87px;font-size:4.6px;line-height:5.21px;font-family:'Liberation Mono',monospace;transform:scaleX(0.7246);transform-origin:0 0;will-change:transform;"><span style="color:#9cdcfe">    name: req.body.name ,</span></div>
<div class="a" style="left:1744.70px;top:262.87px;font-size:4.6px;line-height:5.21px;font-family:'Liberation Mono',monospace;transform:scaleX(0.7246);transform-origin:0 0;will-change:transform;"><span style="color:#9cdcfe">    email: req.body.email ,</span></div>
<div class="a" style="left:1744.70px;top:266.87px;font-size:4.6px;line-height:5.21px;font-family:'Liberation Mono',monospace;transform:scaleX(0.7246);transform-origin:0 0;will-change:transform;"><span style="color:#9cdcfe">    password: </span><span style="color:#4fc1ff">hashedPassword</span></div>
<div class="a" style="left:1744.70px;top:270.87px;font-size:4.6px;line-height:5.21px;font-family:'Liberation Mono',monospace;transform:scaleX(0.7246);transform-origin:0 0;will-change:transform;"><span style="color:#d4d4d4">});</span></div>
<div class="a" style="left:1744.70px;top:278.87px;font-size:4.6px;line-height:5.21px;font-family:'Liberation Mono',monospace;transform:scaleX(0.7246);transform-origin:0 0;will-change:transform;"><span style="color:#569cd6">const </span><span style="color:#4fc1ff">token</span><span style="color:#d4d4d4"> = </span><span style="color:#dcdcaa">generateToken</span><span style="color:#9cdcfe">(newUser.id);</span></div>
<div class="a" style="left:1744.70px;top:290.87px;font-size:4.6px;line-height:5.21px;font-family:'Liberation Mono',monospace;transform:scaleX(0.7246);transform-origin:0 0;will-change:transform;"><span style="color:#9cdcfe">    res</span><span style="color:#dcdcaa">.status</span><span style="color:#b5cea8">(201)</span><span style="color:#dcdcaa">.json</span><span style="color:#d4d4d4">({</span></div>
<div class="a" style="left:1744.70px;top:294.87px;font-size:4.6px;line-height:5.21px;font-family:'Liberation Mono',monospace;transform:scaleX(0.7246);transform-origin:0 0;will-change:transform;"><span style="color:#9cdcfe">       token,</span></div>
<div class="a" style="left:1744.70px;top:298.87px;font-size:4.6px;line-height:5.21px;font-family:'Liberation Mono',monospace;transform:scaleX(0.7246);transform-origin:0 0;will-change:transform;"><span style="color:#9cdcfe">       user:{</span></div>
<div class="a" style="left:1744.70px;top:302.87px;font-size:4.6px;line-height:5.21px;font-family:'Liberation Mono',monospace;transform:scaleX(0.7246);transform-origin:0 0;will-change:transform;"><span style="color:#9cdcfe">          id: </span><span style="color:#4fc1ff">newUser.id</span><span style="color:#d4d4d4"> ,</span></div>
<div class="a" style="left:1744.70px;top:306.87px;font-size:4.6px;line-height:5.21px;font-family:'Liberation Mono',monospace;transform:scaleX(0.7246);transform-origin:0 0;will-change:transform;"><span style="color:#9cdcfe">          name : </span><span style="color:#4fc1ff">newUser.name</span></div>
<div class="a" style="left:1744.70px;top:314.87px;font-size:4.6px;line-height:5.21px;font-family:'Liberation Mono',monospace;transform:scaleX(0.7246);transform-origin:0 0;will-change:transform;"><span style="color:#d4d4d4">       }</span></div>
<div class="a" style="left:1744.70px;top:318.87px;font-size:4.6px;line-height:5.21px;font-family:'Liberation Mono',monospace;transform:scaleX(0.7246);transform-origin:0 0;will-change:transform;"><span style="color:#d4d4d4">    })</span></div>
<div class="a" style="left:1744.70px;top:322.87px;font-size:4.6px;line-height:5.21px;font-family:'Liberation Mono',monospace;transform:scaleX(0.7246);transform-origin:0 0;will-change:transform;"><span style="color:#d4d4d4">}</span></div>
<div class="a" style="left:1733px;top:239px;width:12px;height:5px;background:linear-gradient(#000,rgba(0,0,0,0))"></div>
<div class="a" style="left:1890px;top:199px;width:1.5px;height:376px;background:#0f0f0f;"></div>
<div class="a" style="left:1890px;top:199px;width:30px;height:1.5px;background:#0f0f0f;"></div>
<div class="a" style="left:1891.5px;top:274px;width:28.5px;height:84px;background:#454545;"></div>
<div class="a" style="left:1891.5px;top:393.3px;width:28.5px;height:4.4px;background:#8a8a8a;"></div>
<div class="a" style="left:471px;top:575px;width:1449px;height:2px;background:#2b2b2b;"></div>
<div class="a" style="left:471px;top:577px;width:1449px;height:382px;background:#181818;"></div>
<div class="a" style="left:512.97px;top:601.29px;font-size:23.76px;line-height:26.54px;color:#9d9d9d;font-family:'Liberation Sans',sans-serif;transform:scaleX(0.8899);transform-origin:0 0;">PROBLEMS</div>
<div class="a" style="left:681.37px;top:601.29px;font-size:23.76px;line-height:26.54px;color:#9d9d9d;font-family:'Liberation Sans',sans-serif;transform:scaleX(0.9125);transform-origin:0 0;">OUTPUT</div>
<div class="a" style="left:822.05px;top:601.29px;font-size:23.76px;line-height:26.54px;color:#9d9d9d;font-family:'Liberation Sans',sans-serif;transform:scaleX(0.8976);transform-origin:0 0;">DEBUG CONSOLE</div>
<div class="a" style="left:1059.11px;top:601.29px;font-size:23.76px;line-height:26.54px;color:#e7e7e7;font-family:'Liberation Sans',sans-serif;transform:scaleX(0.9233);transform-origin:0 0;">TERMINAL</div>
<div class="a" style="left:1055px;top:635.8px;width:119px;height:2.4px;background:#0078d4;"></div>
<div class="a" style="left:1221.14px;top:601.29px;font-size:23.76px;line-height:26.54px;color:#9d9d9d;font-family:'Liberation Sans',sans-serif;transform:scaleX(0.8527);transform-origin:0 0;">PORTS</div>
<svg style="left:1342px;top:597.7px" width="31.2" height="31.1" viewBox="0 0 31.2 31.1"><g fill="none" stroke="#cccccc" stroke-width="2.2" stroke-linecap="round" stroke-linejoin="round"><rect x="1.2" y="1.2" width="28.8" height="28.700000000000003" rx="5.6"/><path d="M5.3 9.6 13.4 16.8 5.3 23.8M13.9 23.3H26.7" stroke-width="2.5"/></g></svg>
<div class="a" style="left:1382.86px;top:598.28px;font-size:28.08px;line-height:31.37px;color:#cccccc;font-family:'Liberation Sans',sans-serif;transform:scaleX(0.8518);transform-origin:0 0;">powershell</div>
<svg style="left:1522.5px;top:600.7px" width="25.5" height="24.3" viewBox="0 0 25.5 24.3"><path d="M12.75 0.5v23.3M0.5 12.15h24.5" stroke="#cccccc" stroke-width="2.3"/></svg>
<svg style="left:1561.8px;top:609.8px" width="16.600000000000136" height="9.5" viewBox="0 0 16.600000000000136 9.5"><path d="M1 1 8.300000000000068 8.5 15.600000000000136 1" fill="none" stroke="#cccccc" stroke-width="2.2" stroke-linecap="round" stroke-linejoin="round"/></svg>
<svg style="left:1604px;top:598px" width="32" height="30" viewBox="0 0 32 30"><g fill="none" stroke="#cccccc" stroke-width="2.4"><rect x="1.2" y="1.2" width="29.5" height="27.6" rx="4.5"/><path d="M16 1.2v27.6"/></g></svg>
<svg style="left:1662px;top:596px" width="29" height="34" viewBox="0 0 29 34"><g fill="none" stroke="#cccccc" stroke-width="2.3" stroke-linejoin="round" stroke-linecap="round"><path d="M1.2 5.8h26.6"/><path d="M9.2 5.8a5.3 4.6 0 0 1 10.6 0"/><path d="M3.8 5.8 6.2 29a3.5 3.5 0 0 0 3.5 3.2h9.6a3.5 3.5 0 0 0 3.5-3.2l2.4-23.2"/><path d="M11 13v12.5M18 13v12.5"/></g></svg>
<div class="a" style="left:1720.2px;top:610.5px;width:5.6px;height:5.6px;border-radius:50%;background:#cccccc"></div>
<div class="a" style="left:1729.2px;top:610.5px;width:5.6px;height:5.6px;border-radius:50%;background:#cccccc"></div>
<div class="a" style="left:1738.2px;top:610.5px;width:5.6px;height:5.6px;border-radius:50%;background:#cccccc"></div>
<div class="a" style="left:1773px;top:597px;width:1.8px;height:35px;background:#6a6a6a;"></div>
<svg style="left:1801px;top:598.5px" width="30" height="28" viewBox="0 0 30 28"><g fill="none" stroke="#cccccc" stroke-width="2.4" stroke-linecap="round"><path d="M1.5 9V5a3.5 3.5 0 0 1 3.5-3.5h4M21 1.5h4A3.5 3.5 0 0 1 28.5 5v4M28.5 19v4a3.5 3.5 0 0 1-3.5 3.5h-4M9 26.5H5A3.5 3.5 0 0 1 1.5 23v-4"/></g></svg>
<svg style="left:1861px;top:602px" width="22" height="20" viewBox="0 0 22 20"><path d="M1 1 21 19M21 1 1 19" stroke="#cccccc" stroke-width="2.2"/></svg>
<div class="a" style="left:514.00px;top:668.62px;font-size:27.72px;line-height:31.40px;font-family:'Liberation Mono',monospace;letter-spacing:-0.632px;"><span style="color:#cccccc">\MOVEIS-API&gt; </span><span style="color:#f5f543">nom</span><span style="color:#cccccc"> run start</span></div>
<div class="a" style="left:514.00px;top:705.62px;font-size:27.72px;line-height:31.40px;font-family:'Liberation Mono',monospace;letter-spacing:-0.632px;"><span style="color:#f14c4c">nom : The term &#x27;nom&#x27; is not</span></div>
<div class="a" style="left:514.00px;top:742.62px;font-size:27.72px;line-height:31.40px;font-family:'Liberation Mono',monospace;letter-spacing:-0.632px;"><span style="color:#f14c4c">recognized as the name of a</span></div>
<div class="a" style="left:514.00px;top:779.62px;font-size:27.72px;line-height:31.40px;font-family:'Liberation Mono',monospace;letter-spacing:-0.632px;"><span style="color:#f14c4c">cmdlet, function, script file,</span></div>
<div class="a" style="left:514.00px;top:816.62px;font-size:27.72px;line-height:31.40px;font-family:'Liberation Mono',monospace;letter-spacing:-0.632px;"><span style="color:#f14c4c">or operable program. Check the</span></div>
<div class="a" style="left:514.00px;top:853.62px;font-size:27.72px;line-height:31.40px;font-family:'Liberation Mono',monospace;letter-spacing:-0.632px;"><span style="color:#f14c4c">spelling of the name, or if a</span></div>
<div class="a" style="left:514.00px;top:890.62px;font-size:27.72px;line-height:31.40px;font-family:'Liberation Mono',monospace;letter-spacing:-0.632px;"><span style="color:#f14c4c">path was included, verify that</span></div>
<div class="a" style="left:514.00px;top:927.62px;font-size:27.72px;line-height:31.40px;font-family:'Liberation Mono',monospace;letter-spacing:-0.632px;"><span style="color:#f14c4c">the path is correct and try</span></div>
<svg style="left:485.8px;top:673.3px" width="18.4" height="17.4" viewBox="0 0 18.4 17.4"><g fill="none" stroke="#f14c4c" stroke-width="2"><circle cx="9.2" cy="8.7" r="7.7"/><path d="M6.2 5.7 12.2 11.7M12.2 5.7 6.2 11.7"/></g></svg>
<div class="a" style="left:1045px;top:663px;width:1.5px;height:296px;background:#050505;"></div>
<div class="a" style="left:1045px;top:663px;width:30px;height:1.5px;background:#050505;"></div>
<div class="a" style="left:1065.3px;top:810.8px;width:9.7px;height:13.2px;background:#f14c4c;"></div>
<div class="a" style="left:1045.8px;top:938px;width:9.5px;height:12.8px;background:#5a5a5a;"></div>
<div class="a" style="left:1075.5px;top:650px;width:2px;height:309px;background:#2b2b2b;"></div>
<div class="a" style="left:1120.00px;top:665.22px;font-size:27.72px;line-height:31.40px;font-family:'Liberation Mono',monospace;letter-spacing:-0.632px;"><span style="color:#cccccc">op\MOVEIS-API&gt; </span><span style="color:#f14c4c">^C</span></div>
<div class="a" style="left:1120.00px;top:702.22px;font-size:27.72px;line-height:31.40px;font-family:'Liberation Mono',monospace;letter-spacing:-0.632px;"><span style="color:#cccccc">PS C:\Users\DELL\OneDrive\Deskt</span></div>
<div class="a" style="left:1120.00px;top:739.22px;font-size:27.72px;line-height:31.40px;font-family:'Liberation Mono',monospace;letter-spacing:-0.632px;"><span style="color:#cccccc">op\MOVEIS-API&gt; </span><span style="color:#f5f543">node</span><span style="color:#cccccc"> index</span></div>
<div class="a" style="left:1120.00px;top:780.52px;font-size:27.72px;line-height:31.40px;font-family:'Liberation Mono',monospace;letter-spacing:-0.632px;"><span style="color:#cccccc">HERE `users`.`email` = &#x27;sara.te</span></div>
<div class="a" style="left:1120.00px;top:817.37px;font-size:27.72px;line-height:31.40px;font-family:'Liberation Mono',monospace;letter-spacing:-0.632px;"><span style="color:#cccccc">st.account@gmail.com&#x27;;</span></div>
<div class="a" style="left:1120.00px;top:854.22px;font-size:27.72px;line-height:31.40px;font-family:'Liberation Mono',monospace;letter-spacing:-0.632px;"><span style="color:#cccccc">POST /api/auth/register </span><span style="color:#f5f543">400</span><span style="color:#cccccc"> 5.4</span></div>
<div class="a" style="left:1120.00px;top:891.07px;font-size:27.72px;line-height:31.40px;font-family:'Liberation Mono',monospace;letter-spacing:-0.632px;"><span style="color:#cccccc">58 ms - 21</span></div>
<div class="a" style="left:1081px;top:771px;width:547px;height:5px;background:linear-gradient(rgba(0,0,0,.85),rgba(0,0,0,0))"></div>
<div class="a" style="left:1121.2px;top:922px;width:15.8px;height:37px;border:2px solid #cccccc"></div>
<div class="a" style="left:1631px;top:663px;width:1.5px;height:296px;background:#050505;"></div>
<div class="a" style="left:1631px;top:663px;width:30px;height:1.5px;background:#050505;"></div>
<div class="a" style="left:1632px;top:715.8px;width:8.8px;height:12.5px;background:#5a5a5a;"></div>
<div class="a" style="left:1650.8px;top:720px;width:9.2px;height:12.5px;background:#f14c4c;"></div>
<div class="a" style="left:1661.7px;top:650px;width:1.8px;height:309px;background:#2b2b2b;"></div>
<div class="a" style="left:1663.5px;top:650px;width:256.5px;height:47.5px;background:#37373d;"></div>
<div class="a" style="left:1663px;top:650px;width:2.2px;height:47.5px;background:#0078d4;"></div>
<svg style="left:1692.5px;top:675px" width="13" height="19" viewBox="0 0 13 19"><path d="M1.6 19V1.6H12.5" fill="none" stroke="#cccccc" stroke-width="3"/></svg>
<svg style="left:1692.5px;top:707.5px" width="13" height="19" viewBox="0 0 13 19"><path d="M1.6 0V17.4H12.5" fill="none" stroke="#cccccc" stroke-width="3"/></svg>
<svg style="left:1714.2px;top:658px" width="30.8" height="30.7" viewBox="0 0 30.8 30.7"><g fill="none" stroke="#cccccc" stroke-width="2.2" stroke-linecap="round" stroke-linejoin="round"><rect x="1.2" y="1.2" width="28.400000000000002" height="28.3" rx="5.5"/><path d="M5.2 9.5 13.2 16.6 5.2 23.5M13.7 23.0H26.3" stroke-width="2.5"/></g></svg>
<div class="a" style="left:1753.48px;top:659.28px;font-size:28.08px;line-height:31.37px;color:#cccccc;font-family:'Liberation Sans',sans-serif;transform:scaleX(1.0066);transform-origin:0 0;">powershell</div>
<svg style="left:1714.2px;top:706.3px" width="30.8" height="30.4" viewBox="0 0 30.8 30.4"><g fill="none" stroke="#cccccc" stroke-width="2.2" stroke-linecap="round" stroke-linejoin="round"><rect x="1.2" y="1.2" width="28.400000000000002" height="28.0" rx="5.5"/><path d="M5.2 9.4 13.2 16.4 5.2 23.3M13.7 22.8H26.3" stroke-width="2.5"/></g></svg>
<div class="a" style="left:1753.35px;top:707.08px;font-size:28.08px;line-height:31.37px;color:#cccccc;font-family:'Liberation Sans',sans-serif;transform:scaleX(1.0479);transform-origin:0 0;">node</div>
<div class="a" style="left:0px;top:959px;width:1920px;height:2px;background:#2b2b2b;"></div>
<div class="a" style="left:0px;top:961px;width:1920px;height:47px;background:#181818;"></div>
<svg style="left:24.4px;top:970px" width="21" height="25" viewBox="0 0 21 25"><g fill="none" stroke="#cccccc" stroke-width="1.9" stroke-linecap="round" stroke-linejoin="round"><path d="M0.8 8 10.1 16.1 0.8 24.3"/><path d="M20.3 0.6 11.1 8.7 20.3 16.8"/></g></svg>
<svg style="left:90px;top:968.5px" width="28" height="28" viewBox="0 0 28 28"><g fill="none" stroke="#cccccc" stroke-width="2.2"><circle cx="14" cy="14" r="12.8"/><path d="M8.8 8.8 19.2 19.2M19.2 8.8 8.8 19.2"/></g></svg>
<div class="a" style="left:127.55px;top:968.74px;font-size:25.92px;line-height:28.96px;color:#cccccc;font-family:'Liberation Sans',sans-serif;transform:scaleX(1.0411);transform-origin:0 0;">0</div>
<svg style="left:152.7px;top:968.5px" width="28" height="26" viewBox="0 0 28 26"><g fill="none" stroke="#cccccc" stroke-width="2.2" stroke-linejoin="round"><path d="M14 1.5 26.8 24.5H1.2z"/><path d="M14 9v8"/></g><circle cx="14" cy="20.5" r="1.5" fill="#cccccc"/></svg>
<div class="a" style="left:190.17px;top:968.74px;font-size:25.92px;line-height:28.96px;color:#cccccc;font-family:'Liberation Sans',sans-serif;transform:scaleX(1.0169);transform-origin:0 0;">0</div>
<div class="a" style="left:855.7px;top:961px;width:69.3px;height:46px;background:#3a3d41;"></div>
<svg style="left:874.7px;top:966.7px" width="29" height="29" viewBox="0 0 29 29"><g fill="none" stroke="#cccccc" stroke-width="2.2" stroke-linecap="round"><circle cx="12" cy="12" r="10.8"/><path d="M19.8 19.8 27.8 27.8M12 6.5v11M6.5 12h11"/></g></svg>
<div class="a" style="left:940.37px;top:970.04px;font-size:25.92px;line-height:28.96px;color:#cccccc;font-family:'Liberation Sans',sans-serif;transform:scaleX(0.9554);transform-origin:0 0;">Ln 22, Col 1</div>
<div class="a" style="left:1109.32px;top:970.04px;font-size:25.92px;line-height:28.96px;color:#cccccc;font-family:'Liberation Sans',sans-serif;transform:scaleX(0.9141);transform-origin:0 0;">Spaces: 4</div>
<div class="a" style="left:1247.77px;top:970.04px;font-size:25.92px;line-height:28.96px;color:#cccccc;font-family:'Liberation Sans',sans-serif;transform:scaleX(0.9629);transform-origin:0 0;">UTF-8</div>
<div class="a" style="left:1351.57px;top:970.04px;font-size:25.92px;line-height:28.96px;color:#cccccc;font-family:'Liberation Sans',sans-serif;transform:scaleX(0.8602);transform-origin:0 0;">CRLF</div>
<div class="a" style="left:1446.70px;top:969.54px;font-size:25.92px;line-height:28.96px;color:#cccccc;font-family:'Liberation Sans',sans-serif;transform:scaleX(1.1517);transform-origin:0 0;">{ }</div>
<div class="a" style="left:1490.62px;top:970.04px;font-size:25.92px;line-height:28.96px;color:#cccccc;font-family:'Liberation Sans',sans-serif;transform:scaleX(0.9335);transform-origin:0 0;">JavaScript</div>
<svg style="left:1637.8px;top:966.7px" width="36.2" height="31.4" viewBox="0 0 36.2 31.4"><g fill="#cccccc"><path d="M0 22C0 16 4 13 8 13H28C32 13 36.2 16 36.2 22 36.2 28 28 31.4 18.1 31.4 8 31.4 0 28 0 22Z"/><rect x="3.8" y="0" width="14.8" height="15.8" rx="5.5"/><rect x="18" y="0" width="14.8" height="15.8" rx="5.5"/></g><g fill="#181818"><rect x="7.5" y="4.1" width="8.1" height="8.1" rx="2.8"/><rect x="20.6" y="4.1" width="8.2" height="8.1" rx="2.8"/><path d="M7.5 18.8C7.5 17 8.5 15.6 10 15.6H15.5L18.1 18 20.7 15.6H26.6C28.1 15.6 29.1 17 29.1 18.8V23.5C29.1 25.5 24 26.9 18.3 26.9 12.6 26.9 7.5 25.5 7.5 23.5Z"/></g><g fill="#cccccc"><rect x="12.2" y="18.2" width="4" height="6.5" rx="2"/><rect x="20" y="18.2" width="4.3" height="6.5" rx="2"/></g></svg>
<svg style="left:1709.7px;top:971px" width="31.3" height="23" viewBox="0 0 31.3 23"><g fill="none" stroke="#cccccc" stroke-width="2.8" stroke-linecap="round"><path d="M5.2 1.5C1 6.5 1 16.5 5.2 21.5M26.1 1.5C30.3 6.5 30.3 16.5 26.1 21.5M10.5 5.5C7.5 8.5 7.5 14.5 10.5 17.5M20.8 5.5C23.8 8.5 23.8 14.5 20.8 17.5"/></g><circle cx="15.65" cy="11.3" r="2.7" fill="#cccccc"/></svg>
<div class="a" style="left:1748.15px;top:970.04px;font-size:25.92px;line-height:28.96px;color:#cccccc;font-family:'Liberation Sans',sans-serif;transform:scaleX(0.9623);transform-origin:0 0;">Go Live</div>
<svg style="left:1873.2px;top:968.6px" width="25" height="27.5" viewBox="0 0 25 27.5"><g fill="none" stroke="#cccccc" stroke-width="2.2" stroke-linejoin="round"><path d="M12.5 1.5c-5 0-8.5 3.8-8.5 8.5v7L1.2 21.5h22.6L21 17v-7c0-4.7-3.5-8.5-8.5-8.5z"/><path d="M8.8 23.5a3.8 3.8 0 0 0 7.4 0"/></g></svg>
<div class="a" style="left:0;top:1008px;width:1920px;height:72px;background:linear-gradient(90deg,#261c25 0%,#2a1c22 24%,#32211c 33%,#2e2519 45%,#2e2618 53%,#32221a 63%,#3a1e17 75%,#391c16 88%,#351c18 100%)"></div>
<div class="a" style="left:0px;top:1008px;width:1920px;height:2px;background:#3f373b;"></div>
<div class="a" style="left:28.5px;top:1021px;font-size:18px;line-height:22px;color:#ffffff">٠٨:٢٣ م</div>
<div class="a" style="left:28.5px;top:1045px;font-size:18px;line-height:22px;color:#ffffff">٤٧/٠٥/٢٨</div>
<svg style="left:121.7px;top:1032.5px" width="25" height="19" viewBox="0 0 25 19"><g fill="none" stroke="#ffffff" stroke-width="1.8" stroke-linejoin="round"><path d="M5 4.5H3a2 2 0 0 0-2 2v9a2 2 0 0 0 2 2h16a2 2 0 0 0 2-2v-9a2 2 0 0 0-2-2h-7"/><path d="M23 8.5v5"/></g><path d="M2.5 17 16 6.5h3v9.5H2.5z" fill="#ffffff"/><path d="M8.5 0 4.5 7h3l-1 5 4-7h-3z" fill="#ffffff"/></svg>
<svg style="left:157.5px;top:1034.5px" width="25" height="20" viewBox="0 0 25 20"><g fill="none" stroke="#ffffff" stroke-width="1.7" stroke-linejoin="round" stroke-linecap="round"><path d="M1 7h4l5.5-5v16L5 13H1z"/><path d="M14 6.5a4.5 4.5 0 0 1 0 7M17 4a8 8 0 0 1 0 12"/><path d="M20.5 1.5a12 12 0 0 1 0 17" stroke="#8a8a8a"/></g></svg>
<svg style="left:193.7px;top:1035px" width="25" height="17" viewBox="0 0 25 17"><g fill="none" stroke="#ffffff" stroke-width="1.9" stroke-linecap="round"><path d="M1 5.5a16.5 16.5 0 0 1 23 0M4.5 9a11.5 11.5 0 0 1 16 0M8 12.3a6.5 6.5 0 0 1 9 0"/></g><circle cx="12.5" cy="15.2" r="1.8" fill="#ffffff"/></svg>
<div class="a" style="left:243.59px;top:1022.98px;font-size:18.8px;line-height:21.00px;color:#ffffff;font-family:'Liberation Sans',sans-serif;transform:scaleX(0.9129);transform-origin:0 0;">ENG</div>
<div class="a" style="left:242.87px;top:1045.98px;font-size:18.8px;line-height:21.00px;color:#ffffff;font-family:'Liberation Sans',sans-serif;transform:scaleX(0.9380);transform-origin:0 0;">INTL</div>
<svg style="left:307.5px;top:1035px" width="25" height="17" viewBox="0 0 25 17"><path d="M6 16.5h14.5a4.3 4.3 0 0 0 .8-8.5A7 7 0 0 0 8.2 5 5.6 5.6 0 0 0 6 16.5z" fill="#d9d9d9"/><path d="M6 16.5h14.5a4.3 4.3 0 0 0 .8-8.5 7 7 0 0 0-7-4" fill="#a9a9a9" opacity=".6"/></svg>
<svg style="left:360px;top:1039px" width="16.5" height="9.5" viewBox="0 0 16.5 9.5"><path d="M1 8.5 8.25 1.2 15.5 8.5" fill="none" stroke="#ffffff" stroke-width="1.9" stroke-linecap="round" stroke-linejoin="round"/></svg>
<svg style="left:493.7px;top:1025.5px" width="36.5" height="36.5" viewBox="0 0 36.5 36.5"><defs><clipPath id="dbc"><circle cx="18.25" cy="18.25" r="16.5"/></clipPath></defs><circle cx="18.25" cy="18.25" r="17.1" fill="#ffffff" stroke="#3ea9b6" stroke-width="2.3"/><g clip-path="url(#dbc)" fill="#2b1f1f"><path d="M11.5 37C12 31 14 27 19 26.5 23 26 26 28 27.5 31L28.5 37Z"/><path d="M4.5 14.5C8 8.5 13 5 19.5 5.3L19.3 6.3C14 6.5 9.5 9.5 6 15Z"/><path d="M5.8 13.5 9.5 12.5 8.5 19.5 6.5 21Z"/><ellipse cx="25.3" cy="12.5" rx="3.6" ry="2.1" transform="rotate(-12 25.3 12.5)"/><path d="M27.5 16.5C28.5 19 28.5 23 26.5 26.5L25.8 26C27 23 27 19.5 26.6 17Z"/></g></svg>
<div class="a" style="left:507px;top:1068.2px;width:9px;height:4.5px;border-radius:3px;background:#a39d98"></div>
<svg style="left:560px;top:1025.5px" width="36.5" height="36.5" viewBox="0 0 36.5 36.5"><circle cx="18.25" cy="18.25" r="18.25" fill="#ff6c37"/><path d="M7.5 27.5 9 29 15.5 25 22.5 17.5 18.5 13.5 11.5 21z" fill="#ffffff"/><path d="M14 14.5 19.5 12 24 16.5 21 21.5" fill="none" stroke="#ffffff" stroke-width="1.2"/><circle cx="26.2" cy="9.8" r="2.6" fill="#ffffff"/><circle cx="26.2" cy="9.8" r="1.1" fill="#ff6c37"/></svg>
<div class="a" style="left:573px;top:1068.2px;width:9px;height:4.5px;border-radius:3px;background:#a39d98"></div>
<svg style="left:625.5px;top:1026px" width="36.5" height="36.5" viewBox="0 0 36.5 36.5"><path d="M18.25 18.25 2.66 9.25A18 18 0 0 1 33.84 9.25Z" fill="#e33b2e"/><path d="M18.25 18.25 33.84 9.25A18 18 0 0 1 18.25 36.25Z" fill="#f8c21a"/><path d="M18.25 18.25 18.25 36.25A18 18 0 0 1 2.66 9.25Z" fill="#22a04b"/><circle cx="18.25" cy="18.25" r="8.3" fill="#ffffff"/><circle cx="18.25" cy="18.25" r="6.6" fill="#3a80f0"/></svg>
<div class="a" style="left:618px;top:1018.7px;width:23.5px;height:23.5px;border-radius:50%;background:#7d8f98;color:#e3e8ea;font-size:14px;line-height:23.5px;text-align:center">J</div>
<div class="a" style="left:643.7px;top:1026px;width:18.5px;height:18px;border-radius:50%;background:#7f9199;color:#e3e8ea;font-size:11px;line-height:18px;text-align:center">J</div>
<div class="a" style="left:638.7px;top:1068.2px;width:9.299999999999955px;height:4.5px;border-radius:3px;background:#a39d98"></div>
<div class="a" style="left:680.5px;top:1014.5px;width:59px;height:58.5px;border-radius:7px;background:rgba(255,255,255,0.07);border:1px solid rgba(255,255,255,0.06)"></div>
<svg style="left:692px;top:1026px" width="36" height="36" viewBox="0 0 100 100"><path fill-rule="evenodd" d="M96.5 10.8 75.9 0.9c-2.4-1.2-5.2-.7-7.1 1.2L29.4 38 12.2 25c-1.6-1.2-3.8-1.1-5.3.2L1.4 30.3c-1.8 1.7-1.8 4.5 0 6.2L16.3 50 1.4 63.5c-1.8 1.7-1.8 4.5 0 6.2l5.5 5c1.5 1.4 3.7 1.5 5.3.2L29.4 62l39.4 35.9c1.9 1.9 4.7 2.4 7.1 1.2l20.6-9.9c2.2-1 3.5-3.2 3.5-5.6V16.4c0-2.4-1.4-4.6-3.5-5.6zM75 72.7 45.1 50 75 27.3z" fill="#1787d6"/><path d="M75.9 99.1 96.5 89.2c2.2-1 3.5-3.2 3.5-5.6V16.4c0-2.4-1.4-4.6-3.5-5.6L75.9.9C74.2 0 72.4-.1 70.8.5 72.5 1 75 2.5 75 5.5V94.5c0 3-2.5 4.5-4.2 5 1.6.5 3.5.4 5.1-.4z" fill="#27abf0"/></svg><div class="a" style="left:698px;top:1068.2px;width:24px;height:4.5px;border-radius:3px;background:#e39ce8"></div>
<svg style="left:768.7px;top:1031px" width="15" height="26" viewBox="0 0 15 26"><path d="M0 0h4.5l6 16V0H15v26c-1.5-.2-3-.3-4.5-.3L4.5 9.5V25.6C3 25.7 1.5 25.8 0 26z" fill="#e50914"/><path d="M0 0h4.5l6 16 .2 9.8-6.2-16.3z" fill="#b1060f" opacity=".5"/></svg>
<svg style="left:823.7px;top:1027px" width="35" height="35" viewBox="0 0 35 35"><path d="M9 7V5a3 3 0 0 1 3-3h11a3 3 0 0 1 3 3v2" fill="none" stroke="#1e90d6" stroke-width="2.4"/><rect x="0.5" y="6.5" width="34" height="28" rx="4" fill="#f5f5f5"/><rect x="10" y="13" width="7" height="7" fill="#f35325"/><rect x="18" y="13" width="7" height="7" fill="#81bc06"/><rect x="10" y="21" width="7" height="7" fill="#05a6f0"/><rect x="18" y="21" width="7" height="7" fill="#ffba08"/></svg>
<svg style="left:889.5px;top:1028px" width="37" height="33" viewBox="0 0 37 33"><path d="M0 3a3 3 0 0 1 3-3h9l4 4h18a3 3 0 0 1 3 3v3H0z" fill="#d4a017"/><rect x="0" y="5" width="37" height="27.5" rx="2.5" fill="#f8c93e"/><path d="M7 32.5V24a3 3 0 0 1 3-3h17a3 3 0 0 1 3 3v8.5z" fill="#1a73c8"/><rect x="13" y="24.5" width="11" height="2" rx="1" fill="#8bc4f0"/></svg>
<svg style="left:957.2px;top:1028.75px" width="33" height="30.5" viewBox="0 0 33 30.5"><defs><linearGradient id="cpl" x1="0" y1="0" x2="0" y2="1"><stop offset="0" stop-color="#1aa7ff"/><stop offset=".5" stop-color="#3cbf86"/><stop offset="1" stop-color="#ffcc00"/></linearGradient><linearGradient id="cpr" x1="0" y1="0" x2="0" y2="1"><stop offset="0" stop-color="#b55cf5"/><stop offset=".5" stop-color="#f0508a"/><stop offset="1" stop-color="#ffb04a"/></linearGradient><linearGradient id="cpb" x1="0" y1="0" x2="1" y2="0"><stop offset="0" stop-color="#1f8ff0"/><stop offset="1" stop-color="#1546c8"/></linearGradient></defs><path d="M8 0.5h14c2 0 3 1 3.5 3l1 4.5H19.5z" fill="url(#cpb)"/><path d="M8 0.5h12L13 22.5c-.6 1.6-1.6 2.5-3 2.5H3.5C1.5 25 .3 23.6.8 21.5L5.2 3.2C5.7 1.5 6.5.5 8 .5z" fill="url(#cpl)"/><path d="M6.5 23.5 7.5 28c.4 1.5 1.4 2.3 3 2.3h3.5z" fill="#f05a3a"/><path d="M20.5 8h9.5c2 0 3.2 1.4 2.7 3.4L28 27.5c-.6 2-1.8 3-3.6 3H11.5L18 10.2C18.5 8.8 19.3 8 20.5 8z" fill="url(#cpr)"/></svg>
<svg style="left:1021.9px;top:1025.6px" width="36.5" height="36.5" viewBox="0 0 36.5 36.5"><defs><linearGradient id="edg" x1="0" y1="0" x2="1" y2=".7"><stop offset="0" stop-color="#29aef0"/><stop offset=".5" stop-color="#2cc6d6"/><stop offset="1" stop-color="#5fe565"/></linearGradient><linearGradient id="edb" x1="0" y1="0" x2=".6" y2="1"><stop offset="0" stop-color="#1796ea"/><stop offset="1" stop-color="#0b72d4"/></linearGradient></defs><circle cx="18.25" cy="18.25" r="18" fill="url(#edb)"/><path d="M12 17c-2.5 4-1.5 10 3 14 4 3.5 10 4 15 1 2-1.2 3.6-2.7 4.8-4.5-2 1-4.5 1.2-7 .5-4-1-7.5-4-9-8z" fill="#1258a8"/><path d="M0.4 17A18 18 0 0 1 36.1 18.5C36 23 35 26 32.5 27.8 30.5 29 27.5 29 25.5 27.8 23 26.5 23.5 23 24.5 21 26 17 23.5 12 18.5 11.5 12 11 6 12 0.4 17Z" fill="url(#edg)"/><circle cx="19.2" cy="18.8" r="5" fill="#2e2719"/></svg>
<svg style="left:1087.5px;top:1027px" width="37" height="34" viewBox="0 0 37 34"><rect x="0" y="0" width="27" height="24" rx="2" fill="#f0f0f0"/><rect x="10" y="10" width="27" height="24" rx="2" fill="#6c6c6c"/><rect x="10" y="10" width="17" height="14" fill="#c8c8c8"/></svg>
<div class="a" style="left:1142.5px;top:1020px;width:329px;height:47.5px;border-radius:24px;background:rgba(255,255,255,0.13);border:1.5px solid rgba(255,255,255,0.12)"></div>
<svg style="left:1147.8px;top:1025.3px" width="75" height="38.5" viewBox="0 0 75 38.5"><defs><linearGradient id="sky" x1="0" y1="0" x2="0" y2="1"><stop offset="0" stop-color="#2c1a72"/><stop offset=".55" stop-color="#6a3c98"/><stop offset="1" stop-color="#c77ac8"/></linearGradient><linearGradient id="wat" x1="0" y1="0" x2="1" y2=".4"><stop offset="0" stop-color="#8fe0b0"/><stop offset=".35" stop-color="#9ee8d8"/><stop offset="1" stop-color="#1a6ec8"/></linearGradient><linearGradient id="bld" x1="0" y1="0" x2="0" y2="1"><stop offset="0" stop-color="#f3d28e"/><stop offset="1" stop-color="#d9a860"/></linearGradient></defs><path d="M5 12C9 4 22 1 37 0.5 50 1 61 3 68 9L70.5 29H4.5Z" fill="url(#sky)"/><path d="M6 28.5V21.4H19V11L20.2 7.5 21.4 11V21.4H24.8V11L26 7.5 27.2 11V18H29.2V8.5L30 5 30.8 8.5V18H32.8V12A4.5 5 0 0 1 36.6 7.2V1L37.3 0 38 1V7.2A4.5 5 0 0 1 41.8 12V18H44V8.5L44.8 5 45.6 8.5V18H47.8V11L49 7.5 50.2 11V21.4H53V11L54.2 7.5 55.4 11V21.4H68.7V28.5Z" fill="url(#bld)"/><circle cx="5.8" cy="16.5" r="4.6" fill="#86b83a"/><circle cx="7.2" cy="20.5" r="3.6" fill="#4d8f2a"/><path d="M5.5 20v8.5" stroke="#9a7050" stroke-width="1.2"/><circle cx="69.2" cy="17.5" r="4.6" fill="#86b83a"/><circle cx="67.8" cy="21.5" r="3.6" fill="#4d8f2a"/><path d="M69 21v7.5" stroke="#9a7050" stroke-width="1.2"/><path d="M1 28.5H73L72 31.5 68 33 66 36.5 50 37.5H20L13 36 4 34 2 31Z" fill="url(#wat)"/></svg>
<div class="a" style="left:1377px;top:1026px;font-size:22px;line-height:30px;color:#ffffff">بحث</div>
<svg style="left:1432px;top:1033px" width="23" height="23" viewBox="0 0 23 23"><g fill="none" stroke="#ffffff" stroke-width="2.3" stroke-linecap="round"><circle cx="9.5" cy="9.5" r="8.2"/><path d="M15.5 15.5 21.8 21.8"/></g></svg>
<svg style="left:1491.6px;top:1026.9px" width="36" height="36" viewBox="0 0 36 36"><defs><linearGradient id="wg" x1="0" y1="0" x2="1" y2="1"><stop offset="0" stop-color="#6ce0ff"/><stop offset="1" stop-color="#1a9ee8"/></linearGradient></defs><path d="M0 2a2 2 0 0 1 2-2h15v17H0zM19 0h15a2 2 0 0 1 2 2v15H19zM0 19h17v17H2a2 2 0 0 1-2-2zM19 19h17v15a2 2 0 0 1-2 2H19z" fill="url(#wg)"/></svg>
<svg style="left:1856.8px;top:1029.7px" width="31" height="29.5" viewBox="0 0 31 29.5"><defs><linearGradient id="sun" x1="0" y1="0" x2="1" y2="1"><stop offset="0" stop-color="#ffc20e"/><stop offset="1" stop-color="#f26a0f"/></linearGradient></defs><ellipse cx="15.5" cy="14.75" rx="15.3" ry="14.6" fill="url(#sun)"/></svg>
<div class="a" style="left:1842.6px;top:1018.5px;width:35px;height:23px;border-radius:12px;background:rgba(40,40,40,0.92);color:#ffffff;font-size:15px;line-height:23px;text-align:center">٣٣°</div>
</body></html>
